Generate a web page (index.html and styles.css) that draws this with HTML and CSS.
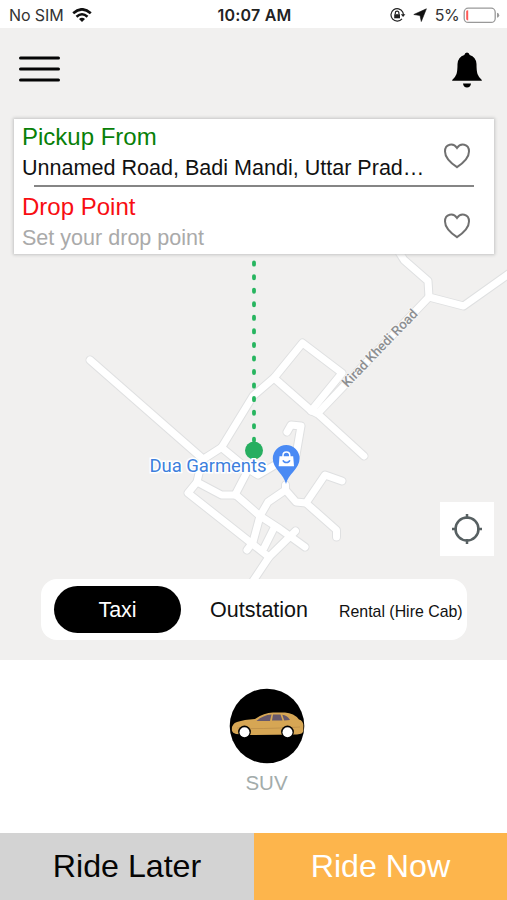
FILE: index.html
```html
<!DOCTYPE html>
<html lang="en">
<head>
<meta charset="utf-8">
<title>Book a ride</title>
<link rel="stylesheet" href="styles.css">
</head>
<body>
<div class="app">
  <header class="status">
    <div class="status-left">
      <span class="carrier">No SIM</span>
      <svg class="wifi" width="20" height="14" viewBox="0 0 20 14" fill="none" stroke="#111" stroke-width="2.6"><path d="M1.2 5.2Q10 -2.6 18.8 5.2M4.5 8.7Q10 3.8 15.5 8.7"/><path d="M7 11Q10 8.6 13 11L10 14Z" fill="#111" stroke="none"/></svg>
    </div>
    <strong class="clock">10:07 AM</strong>
    <div class="status-right">
      <svg width="16" height="14" viewBox="0 0 16 14" fill="none" stroke="#222" stroke-width="1.2"><path d="M12.7 4A6.2 6.2 0 1 0 12 10.8M13.2 8A6.3 6.3 0 0 0 12.7 4"/><path d="M10.8 6.3H15.4L13.1 9.1Z" fill="#222" stroke="none"/><path d="M4.2 6.2H10V10.3H4.2Z" fill="#222" stroke="none"/><path d="M5.3 6V4.9a1.8 1.8 0 0 1 3.6 0V6"/></svg>
      <svg class="arrow" width="14" height="14" viewBox="0 0 14 14"><path d="M13.400 .8L8.300 13.500L7 7.500L.8 6.500Z" fill="#111" stroke="#111" stroke-width=".6" stroke-linejoin="round"/></svg>
      <span class="percent">5%</span>
      <svg width="37" height="17" viewBox="0 0 37 17"><rect x="1.2" y="1.2" width="31" height="14.2" rx="4" fill="#fff" stroke="#999" stroke-width="1.3"/><path d="M3.200 4.600Q3.200 3.200 5.200 3.200V13.400Q3.200 13.400 3.200 12Z" fill="#ff5a57"/><path d="M34 5.8Q36.2 6 36.2 8.3T34 10.8Z" fill="#999"/></svg>
    </div>
  </header>

  <main class="map">
    <svg class="map-canvas" width="507" height="632" viewBox="0 28 507 632">
      <defs>
        <g id="roads" fill="none" stroke-linecap="round" stroke-linejoin="round">
          <path d="M399 252L404 260L428 281L429 297L463.500 306L510 273"/>
          <path d="M429 297L318 413"/>
          <path d="M311 411L342 373L302.500 343L274 378L253 396L221.500 447.500L202 460L197 482L188 493L269 557"/>
          <path d="M274 378L311 410.500L318 414L364 456"/>
          <path d="M90 360L203 459"/>
          <path d="M197 482L221.500 495H236L260 516L280 529L305 547"/>
          <path d="M221.500 447.500L244 466L258 475L275 465L296 455L301 426L291 425L287 432"/>
          <path d="M247 472L235 495"/>
          <path d="M285.500 485V490L268 502L260 516L253 542L247 550"/>
          <path d="M285.500 490L296 502L306 503L336.500 530V537"/>
          <path d="M306 503L325 475L342 481"/>
          <path d="M274 528L264 548"/>
          <path d="M295.500 531L269 557L251 584"/>
        </g>
      </defs>
      <use href="#roads" stroke="#dfe0e1" stroke-width="9"/>
      <use href="#roads" stroke="#fff" stroke-width="7"/>
      <path d="M254 262.500V446" stroke="#27b55f" stroke-width="3.800" stroke-linecap="round" stroke-dasharray="2.200 11.350" fill="none"/>
      <text class="road-name" x="347.500" y="388" transform="rotate(-46 347.500 388)" textLength="102" lengthAdjust="spacingAndGlyphs">Kirad Khedi Road</text>
      <circle cx="254" cy="450.500" r="9" fill="#27ae60"/>
      <text class="place" x="149.500" y="472" textLength="117">Dua Garments</text>
      <path d="M286 484C284 474 272.800 469 272.800 458.500A13.400 13.400 0 0 1 299.600 458.500C299.600 469 288 474 286 484Z" fill="#4a8af4"/>
      <path d="M279.500 456.300H293.200L294 466.300H278.700Z" fill="#fff"/>
      <path d="M283 457V455.500a3.400 3.400 0 0 1 6.800 0V457" fill="none" stroke="#fff" stroke-width="1.500"/>
      <path d="M283 460.200a3.500 3 0 0 0 6.800 0" fill="none" stroke="#4a8af4" stroke-width="1.500"/>
    </svg>

    <div class="toolbar">
      <svg class="menu" width="42" height="28" viewBox="0 0 42 28" stroke="#050505" stroke-width="3" stroke-linecap="round"><path d="M2.500 3H40.500M2.500 14H40.500M2.500 25H40.500"/></svg>
      <svg class="bell" width="30" height="36" viewBox="0 0 30 36"><path d="M15 0.500Q17.200 .5 17.700 3Q24 4.800 24.500 12Q24.500 19 25.500 22Q26.500 25 29.800 28V28.800H.2V28Q3.500 25 4.500 22Q5.500 19 5.500 12Q6 4.800 12.300 3Q12.800 .5 15 .5ZM11 31.500H19Q18.500 35.500 15 35.500T11 31.500Z"/></svg>
    </div>

    <section class="trip">
      <div class="stop">
        <div class="stop-text">
          <div class="label pickup">Pickup From</div>
          <div class="address">Unnamed Road, Badi Mandi, Uttar Prad…</div>
        </div>
        <svg class="heart" width="28" height="26" viewBox="0 0 28 26"><path d="M14 24.200C10 21.500 2 15 2 8.500C2 .7 10.500 -.4 14 5C17.500 -.4 26 .7 26 8.500C26 15 18 21.500 14 24.200Z"/></svg>
      </div>
      <div class="rule"></div>
      <div class="stop">
        <div class="stop-text">
          <div class="label drop">Drop Point</div>
          <div class="address hint">Set your drop point</div>
        </div>
        <svg class="heart" width="28" height="26" viewBox="0 0 28 26"><path d="M14 24.200C10 21.500 2 15 2 8.500C2 .7 10.500 -.4 14 5C17.500 -.4 26 .7 26 8.500C26 15 18 21.500 14 24.200Z"/></svg>
      </div>
    </section>

    <div class="locate">
      <svg width="30" height="30" viewBox="0 0 30 30" fill="none" stroke="#576062" stroke-width="2.500"><circle cx="15" cy="15" r="11.500"/><path d="M15 0V5M15 25V30M0 15H5M25 15H30"/></svg>
    </div>

    <nav class="modes">
      <div class="mode active">Taxi</div>
      <div class="mode outstation">Outstation</div>
      <div class="mode rental">Rental (Hire Cab)</div>
    </nav>
  </main>

  <section class="vehicle">
    <svg width="76" height="76" viewBox="0 0 76 76">
      <circle cx="38" cy="38" r="37.300"/>
      <path d="M3 43Q2 36 8 34Q15 31.500 26 31Q35 24.500 44 24.500H56Q65 25 70 31.500Q75 32.500 74.300 40V43Q74 46 68 46.500L22 47L7 46Q3.500 45 3 43Z" fill="#d6a654"/>
      <path d="M8 40Q30 41.500 71 39" fill="none" stroke="#bb8e49" stroke-width=".8"/>
      <path d="M27.500 33Q34 27 42.500 26.500L41 33ZM44 26.500H51.500L53.500 32.500H43ZM53.300 26.700Q58 27 61 32L55.200 32.500Z" fill="#66586c"/>
      <circle cx="15.500" cy="44" r="6.400"/><circle cx="58.500" cy="44" r="6.400"/>
      <circle cx="15.500" cy="44.300" r="5" fill="#fff"/><circle cx="58.500" cy="44.300" r="5" fill="#fff"/>
    </svg>
    <div class="vehicle-name">SUV</div>
  </section>

  <footer class="actions">
    <div class="action later">Ride Later</div>
    <div class="action now">Ride Now</div>
  </footer>
</div>
</body>
</html>
```
FILE: styles.css
```css
* { box-sizing: border-box; }
body { margin: 0; background: #fff; font-family: "Liberation Sans", Arial, sans-serif; }
svg { display: block; flex: none; }
.app { width: 507px; height: 900px; display: flex; flex-direction: column; overflow: hidden; }

.status { height: 28px; flex: none; display: grid; grid-template-columns: 1fr auto 1fr; align-items: center; padding: 2px 7px 0 9px; font-family: Inter, sans-serif; color: #333; white-space: nowrap; }
.status-left, .status-right { display: flex; align-items: center; }
.status-right { justify-content: flex-end; }
.carrier { font-size: 16px; letter-spacing: -0.1px; }
.wifi { margin-left: 8px; }
.clock { font-size: 16px; font-weight: 600; letter-spacing: 0.2px; color: #222; }
.arrow { margin: 0 8px 0 7px; }
.percent { font-size: 16px; letter-spacing: -0.6px; margin-right: 4px; }

.map { position: relative; height: 632px; flex: none; background: #f1f0ef; display: flex; flex-direction: column; }
.map-canvas { position: absolute; inset: 0; }
.map > :not(.map-canvas) { position: relative; }
.road-name { font: 500 13.5px Roboto, sans-serif; fill: #8d8f91; stroke: #f6f6f6; stroke-width: 2px; paint-order: stroke; }
.place { font: 400 18.5px Roboto, sans-serif; fill: #3d7fdd; stroke: #fff; stroke-width: 3px; paint-order: stroke; }

.toolbar { height: 91px; flex: none; display: flex; justify-content: space-between; padding: 24px 25px 0 18px; }
.menu { margin-top: 3px; }

.trip { height: 135px; flex: none; margin: 0 13px 0 14px; background: #fff; box-shadow: 0 0 3px 1px #c4c4c4; display: flex; flex-direction: column; }
.stop { height: 66px; display: flex; justify-content: space-between; padding: 4px 23px 0 8px; white-space: nowrap; }
.label { font-size: 24px; line-height: 28px; }
.pickup { color: #088008; }
.drop { color: #f80d12; }
.address { font-size: 21.55px; line-height: 26px; margin-top: 4px; color: #111; }
.hint { color: #aaa; }
.heart { margin-top: 20px; fill: none; stroke: #707070; stroke-width: 2px; }
.rule { height: 2px; margin: 0 20px; background: #858585; }
.rule + .stop { padding-top: 6px; }

.locate { width: 54px; height: 54px; flex: none; margin: 248px 13px 0 auto; background: #fff; display: grid; place-items: center; }
.modes { height: 61px; flex: none; width: 426px; margin: 23px 0 0 41px; background: #fff; border-radius: 16px; display: flex; align-items: center; padding-left: 13px; white-space: nowrap; color: #111; }
.mode { font-size: 21.5px; line-height: 24px; }
.active { width: 127px; height: 47px; line-height: 48px; border-radius: 24px; background: #000; color: #fff; text-align: center; }
.outstation { margin-left: 29px; }
.mode.rental { font-size: 15.9px; margin: 4px 0 0 31px; }

.vehicle { height: 173px; flex: none; display: flex; flex-direction: column; align-items: center; padding: 28px 0 0 26px; }
.vehicle-name { font-size: 20.5px; line-height: 24px; margin-top: 7px; color: #a3acab; }

.actions { height: 67px; display: grid; grid-template-columns: 254px 253px; }
.action { font-size: 32.2px; line-height: 67px; text-align: center; }
.later { background: #d3d3d3; color: #050505; }
.now { background: #fdb54c; color: #fff; }
```
